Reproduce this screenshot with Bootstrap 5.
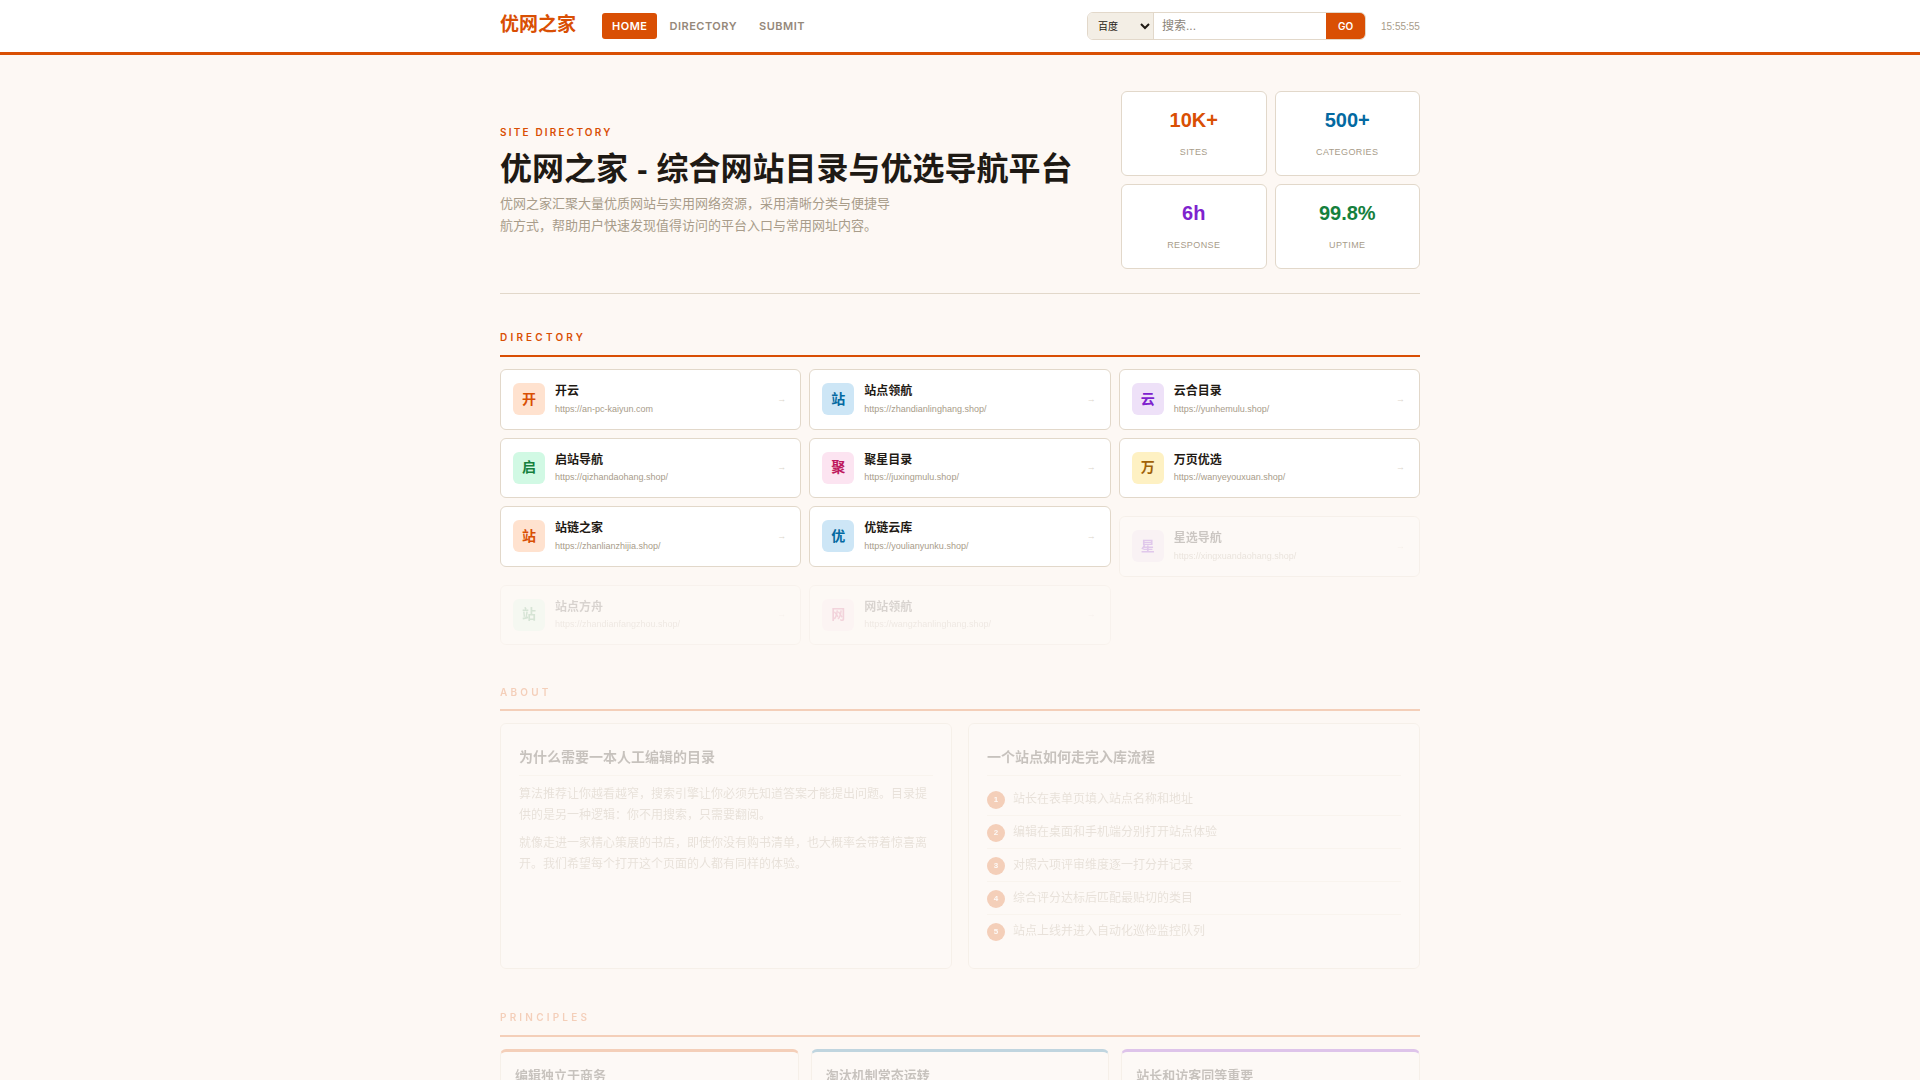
<!DOCTYPE html>
<html lang="zh-CN">
<head>
<meta charset="utf-8">
<title>优网之家</title>
<link rel="stylesheet" href="https://cdn.jsdelivr.net/npm/bootstrap@5.3.0/dist/css/bootstrap.min.css">
<style>
:root{--o:#d94f04;--ink:#1f1a14;--mut:#a89c8a;--bd:#e2d8ca;}
html,body{background:#fdf8f4;}
body{font-family:"Liberation Sans","Noto Sans CJK SC",sans-serif;color:var(--ink);}
.ui-font{font-family:Inter,"Noto Sans CJK SC",sans-serif;}
.wrap{width:920px;margin:0 auto;}
.topbar{background:#fff;border-bottom:3px solid var(--o);height:55px;}
.logo{font-size:19px;font-weight:700;color:var(--o);text-decoration:none;line-height:1;width:102px;margin-top:-3px;}
.tab{font-size:11px;font-weight:600;letter-spacing:.5px;color:#95887a;text-decoration:none;padding:1px 10px 0;height:26px;display:flex;align-items:center;border-radius:3px;}
.tab.on{background:var(--o);color:#fff;}
.tabs{gap:2px;}
.searchbox{width:279px;height:28px;border:1px solid var(--bd);border-radius:6px;overflow:hidden;background:#fff;}
.searchbox select{width:66px;border:0;border-right:1px solid var(--bd);background:#f3eee5;font-size:10px;padding:0 4px 0 6px;color:#1f1a14;outline:0;height:100%;}
.searchbox input{flex:1;min-width:0;border:0;font-size:12px;padding:0 8px;outline:0;color:#1f1a14;background:#fff;}
.searchbox input::placeholder{color:#8a8378;}
.searchbox button{width:39px;border:0;background:var(--o);color:#fff;font-size:10px;font-weight:600;padding:0;}
.clock{font-size:10px;color:var(--mut);margin-left:15px;width:39px;}
.hero{padding:36px 0 24px;border-bottom:1px solid var(--bd);}
.herotext{padding-top:1.5px;}
.kicker{font-size:10px;font-weight:600;letter-spacing:2.2px;color:var(--o);line-height:14px;margin-bottom:9px;}
.hero h1{font-size:32px;font-weight:700;line-height:42px;margin:0 0 3px;color:var(--ink);}
.hero p{font-size:13px;line-height:22px;color:var(--mut);max-width:400px;margin:0;}
.stats{width:299px;grid-template-columns:1fr 1fr;gap:8px;}
.stat{height:85px;background:#fff;border:1px solid var(--bd);border-radius:6px;text-align:center;padding-top:15px;}
.stat b{display:block;font-size:20px;line-height:26px;font-weight:700;}
.stat span{display:block;font-size:9px;letter-spacing:.4px;color:var(--mut);margin-top:13px;line-height:12px;}
.c-o{color:#d94f04;}.c-b{color:#0369a1;}.c-p{color:#7e22ce;}.c-g{color:#15803d;}.c-k{color:#be185d;}.c-y{color:#a16207;}
.sec-h{font-size:10px;font-weight:600;letter-spacing:3.2px;color:var(--o);border-bottom:2px solid var(--o);line-height:14px;padding-bottom:11px;margin-bottom:12px;}
.dirsec{margin-top:36px;}
.dirgrid{grid-template-columns:repeat(3,1fr);gap:8px;}
.site{display:flex;align-items:center;gap:10px;background:#fff;border:1px solid var(--bd);border-radius:6px;padding:12px;height:60.5px;text-decoration:none;color:inherit;}
.ava{width:32px;height:32px;border-radius:6px;display:flex;align-items:center;justify-content:center;font-size:14px;font-weight:700;flex:none;}
.a-o{background:#ffe2cf;}.a-b{background:#cde6f6;}.a-p{background:#eee1f8;}.a-g{background:#d1f9e4;}.a-k{background:#fce4f1;}.a-y{background:#fef1c3;}
.sname{font-size:12px;font-weight:700;line-height:18px;color:var(--ink);}
.surl{font-size:9px;line-height:14px;color:var(--mut);margin:1.5px 0 .5px;}
.arr{margin-left:auto;margin-right:2px;font-size:9px;color:#dcd6cc;}
.fade-a{opacity:.22;transform:translateY(10px);filter:blur(.3px);}
.fade-b{opacity:.16;transform:translateY(10px);filter:blur(.3px);}
.fade-sec{opacity:.24;filter:blur(.5px);}
.aboutsec{margin-top:50px;}
.aboutsec .sec-h{padding-bottom:10px;}
.twocol{grid-template-columns:1fr 1fr;gap:16px;}
.panel{background:#fff;border:1px solid var(--bd);border-radius:6px;padding:23px 18px 18px;height:246px;}
.panel h2{font-size:14px;font-weight:700;line-height:20px;margin:0 0 8px;padding:0 0 8px;border-bottom:1px solid #efe8dd;color:var(--ink);}
.panel p{font-size:12px;line-height:21px;color:var(--mut);margin:0 0 6.5px;}
.steps{list-style:none;margin:-1px 0 0;padding:0;}
.steps li{display:flex;gap:8px;font-size:12px;line-height:22px;padding:5px 0;border-bottom:1px solid #efe8dd;color:var(--mut);}
.steps li:last-child{border-bottom:0;}
.num{width:18px;height:18px;border-radius:50%;background:var(--o);color:#fff;font-size:8px;font-weight:700;display:flex;align-items:center;justify-content:center;flex:none;margin-top:3px;}
.prinsec{margin-top:41px;}
.prgrid{grid-template-columns:repeat(3,1fr);gap:12px;}
.pr{background:#fff;border:1px solid var(--bd);border-top:3px solid;border-radius:6px;padding:14px;height:140px;}
.pr h3{font-size:13px;font-weight:700;line-height:20px;margin:0 0 6px;color:var(--ink);}
.t-o{border-top-color:#d94f04;}.t-b{border-top-color:#0369a1;}.t-p{border-top-color:#7e22ce;}
</style>
</head>
<body>
<header class="topbar">
  <div class="wrap h-100 d-flex align-items-center">
    <a class="logo" href="#">优网之家</a>
    <nav class="tabs d-flex ui-font">
      <a class="tab on" href="#">HOME</a>
      <a class="tab" href="#">DIRECTORY</a>
      <a class="tab" href="#">SUBMIT</a>
    </nav>
    <div class="ms-auto d-flex align-items-center">
      <form class="searchbox d-flex">
        <select aria-label="搜索引擎"><option>百度</option></select>
        <input type="text" placeholder="搜索...">
        <button type="button" class="ui-font">GO</button>
      </form>
      <span class="clock">15:55:55</span>
    </div>
  </div>
</header>
<main class="wrap">
  <section class="hero d-flex justify-content-between align-items-center">
    <div class="herotext">
      <div class="kicker ui-font">SITE DIRECTORY</div>
      <h1>优网之家 - 综合网站目录与优选导航平台</h1>
      <p>优网之家汇聚大量优质网站与实用网络资源，采用清晰分类与便捷导航方式，帮助用户快速发现值得访问的平台入口与常用网址内容。</p>
    </div>
    <div class="stats d-grid">
      <div class="stat"><b class="c-o">10K+</b><span>SITES</span></div>
      <div class="stat"><b class="c-b">500+</b><span>CATEGORIES</span></div>
      <div class="stat"><b class="c-p">6h</b><span>RESPONSE</span></div>
      <div class="stat"><b class="c-g">99.8%</b><span>UPTIME</span></div>
    </div>
  </section>
  <section class="dirsec">
    <div class="sec-h ui-font">DIRECTORY</div>
    <div class="dirgrid d-grid">
      <a class="site" href="#"><span class="ava a-o c-o">开</span><span><div class="sname">开云</div><div class="surl">https://an-pc-kaiyun.com</div></span><span class="arr">→</span></a>
      <a class="site" href="#"><span class="ava a-b c-b">站</span><span><div class="sname">站点领航</div><div class="surl">https://zhandianlinghang.shop/</div></span><span class="arr">→</span></a>
      <a class="site" href="#"><span class="ava a-p c-p">云</span><span><div class="sname">云合目录</div><div class="surl">https://yunhemulu.shop/</div></span><span class="arr">→</span></a>
      <a class="site" href="#"><span class="ava a-g c-g">启</span><span><div class="sname">启站导航</div><div class="surl">https://qizhandaohang.shop/</div></span><span class="arr">→</span></a>
      <a class="site" href="#"><span class="ava a-k c-k">聚</span><span><div class="sname">聚星目录</div><div class="surl">https://juxingmulu.shop/</div></span><span class="arr">→</span></a>
      <a class="site" href="#"><span class="ava a-y c-y">万</span><span><div class="sname">万页优选</div><div class="surl">https://wanyeyouxuan.shop/</div></span><span class="arr">→</span></a>
      <a class="site" href="#"><span class="ava a-o c-o">站</span><span><div class="sname">站链之家</div><div class="surl">https://zhanlianzhijia.shop/</div></span><span class="arr">→</span></a>
      <a class="site" href="#"><span class="ava a-b c-b">优</span><span><div class="sname">优链云库</div><div class="surl">https://youlianyunku.shop/</div></span><span class="arr">→</span></a>
      <a class="site fade-a" href="#"><span class="ava a-p c-p">星</span><span><div class="sname">星选导航</div><div class="surl">https://xingxuandaohang.shop/</div></span><span class="arr">→</span></a>
      <a class="site fade-b" href="#"><span class="ava a-g c-g">站</span><span><div class="sname">站点方舟</div><div class="surl">https://zhandianfangzhou.shop/</div></span><span class="arr">→</span></a>
      <a class="site fade-b" href="#"><span class="ava a-k c-k">网</span><span><div class="sname">网站领航</div><div class="surl">https://wangzhanlinghang.shop/</div></span><span class="arr">→</span></a>
    </div>
  </section>
  <section class="aboutsec fade-sec">
    <div class="sec-h ui-font">ABOUT</div>
    <div class="twocol d-grid">
      <div class="panel">
        <h2>为什么需要一本人工编辑的目录</h2>
        <p>算法推荐让你越看越窄，搜索引擎让你必须先知道答案才能提出问题。目录提供的是另一种逻辑：你不用搜索，只需要翻阅。</p>
        <p>就像走进一家精心策展的书店，即使你没有购书清单，也大概率会带着惊喜离开。我们希望每个打开这个页面的人都有同样的体验。</p>
      </div>
      <div class="panel">
        <h2>一个站点如何走完入库流程</h2>
        <ol class="steps">
          <li><span class="num">1</span>站长在表单页填入站点名称和地址</li>
          <li><span class="num">2</span>编辑在桌面和手机端分别打开站点体验</li>
          <li><span class="num">3</span>对照六项评审维度逐一打分并记录</li>
          <li><span class="num">4</span>综合评分达标后匹配最贴切的类目</li>
          <li><span class="num">5</span>站点上线并进入自动化巡检监控队列</li>
        </ol>
      </div>
    </div>
  </section>
  <section class="prinsec fade-sec">
    <div class="sec-h ui-font">PRINCIPLES</div>
    <div class="prgrid d-grid">
      <div class="pr t-o"><h3>编辑独立于商务</h3></div>
      <div class="pr t-b"><h3>淘汰机制常态运转</h3></div>
      <div class="pr t-p"><h3>站长和访客同等重要</h3></div>
    </div>
  </section>
</main>
<script src="https://cdn.jsdelivr.net/npm/bootstrap@5.3.0/dist/js/bootstrap.bundle.min.js"></script>
</body>
</html>
